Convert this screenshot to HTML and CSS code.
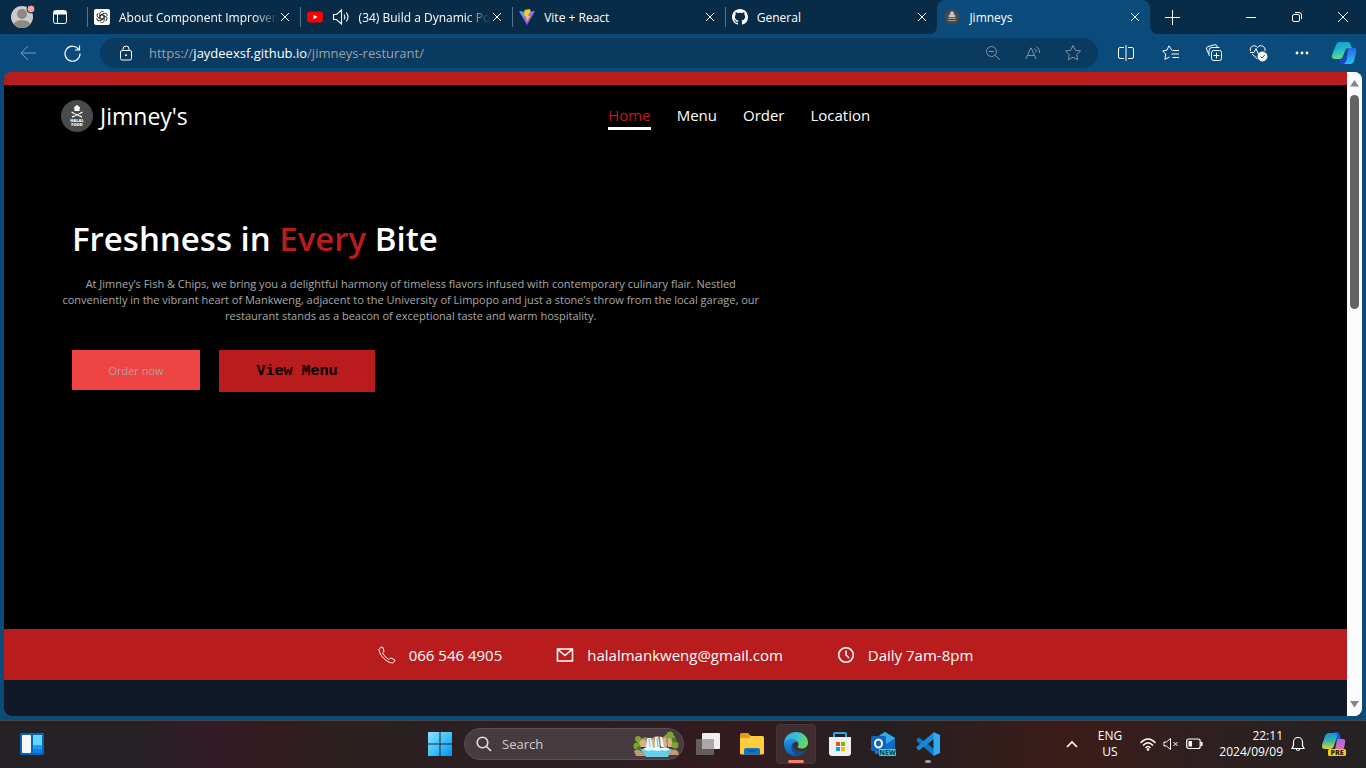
FILE: index.html
```html
<!DOCTYPE html>
<html lang="en">
<head>
<meta charset="utf-8">
<title>Jimneys</title>
<link rel="stylesheet" href="styles.css">
</head>
<body>
<header class="tabstrip">
  <div class="tabstrip-start">
    <button class="plain" aria-label="Profile">
      <svg width="26" height="26" viewBox="0 0 26 26"><clipPath id="av"><circle cx="13" cy="13" r="11"/></clipPath><circle cx="13" cy="13" r="11" fill="#cdcbc8"/><g fill="#8c8986" clip-path="url(#av)"><circle cx="13" cy="10" r="5"/><ellipse cx="13" cy="22" rx="9" ry="6"/></g><circle cx="22" cy="5" r="4" fill="#f7a19c" stroke="#082b47" stroke-width="1"/></svg>
    </button>
    <button class="plain" aria-label="Tab actions">
      <svg width="16" height="16" viewBox="0 0 16 16" fill="none" stroke="#fff"><rect x="1.5" y="1.5" width="13" height="13" rx="2"/><path d="M2 3h12M2 4.500h12" stroke-width="2"/><path d="M5.500 5v9"/></svg>
    </button>
  </div>
  <nav class="tabs" aria-label="Tabs">
    <div class="tab">
      <svg width="16" height="16" viewBox="0 0 16 16"><rect width="16" height="16" rx="2" fill="#fff"/><g fill="none" stroke="#222" stroke-width=".9"><g id="petal"><path d="M8 5.700 10.200 7V11.200a2.400 2.400 0 0 1-3.800 1.900"/></g><use href="#petal" transform="rotate(60 8 8)"/><use href="#petal" transform="rotate(120 8 8)"/><use href="#petal" transform="rotate(180 8 8)"/><use href="#petal" transform="rotate(240 8 8)"/><use href="#petal" transform="rotate(300 8 8)"/></g></svg>
      <span class="tab-title fade">About Component Improvem</span>
      <button class="plain close" aria-label="Close tab"><svg width="10" height="10" viewBox="0 0 10 10"><path d="M1 1l8 8M9 1l-8 8"/></svg></button>
    </div>
    <div class="tab">
      <svg width="16" height="16" viewBox="0 0 16 16"><rect y="2.500" width="16" height="11" rx="3" fill="#f00"/><path d="M6.500 5.700v4.600l4-2.300z" fill="#fff"/></svg>
      <svg width="18" height="18" viewBox="0 0 18 18" fill="none" stroke="#fff" stroke-width="1.100"><path d="M1.500 6.500h3l5-4.500v14l-5-4.500h-3zM12 6.500q1.700 2.500 0 5M14.300 4.500q3.400 4.500 0 9"/></svg>
      <span class="tab-title fade">(34) Build a Dynamic Po</span>
      <button class="plain close" aria-label="Close tab"><svg width="10" height="10" viewBox="0 0 10 10"><path d="M1 1l8 8M9 1l-8 8"/></svg></button>
    </div>
    <div class="tab">
      <svg width="16" height="16" viewBox="0 0 16 16"><defs><linearGradient id="vite" x1="0" y1="0" x2=".6" y2="1"><stop stop-color="#41b9ff"/><stop offset="1" stop-color="#b934fb"/></linearGradient></defs><path d="M0 2l8 1.200L16 2 8 16z" fill="url(#vite)"/><path d="M11 0 5.500 1 5.200 7.300 7 7 6.600 9.500 8 9.200 7.400 13.500 11.500 6.800 9.200 7.200 10.200 4 11.800 3.500z" fill="#ffc520"/></svg>
      <span class="tab-title">Vite + React</span>
      <button class="plain close" aria-label="Close tab"><svg width="10" height="10" viewBox="0 0 10 10"><path d="M1 1l8 8M9 1l-8 8"/></svg></button>
    </div>
    <div class="tab">
      <svg width="16" height="16" viewBox="0 0 16 16" fill="#fff"><path d="M8 0C3.580 0 0 3.580 0 8c0 3.540 2.290 6.530 5.470 7.590.4.070.55-.17.55-.38 0-.19-.01-.82-.01-1.490-2.010.37-2.530-.49-2.690-.94-.09-.23-.48-.94-.82-1.130-.28-.15-.68-.52-.01-.53.63-.01 1.080.58 1.230.82.72 1.210 1.870.87 2.330.66.07-.52.28-.87.51-1.070-1.780-.2-3.640-.89-3.640-3.950 0-.87.31-1.590.82-2.150-.08-.2-.36-1.020.08-2.120 0 0 .67-.21 2.200.82.64-.18 1.320-.27 2-.27s1.360.09 2 .27c1.530-1.040 2.200-.82 2.200-.82.44 1.100.16 1.920.08 2.120.51.56.82 1.270.82 2.150 0 3.070-1.870 3.750-3.650 3.950.29.25.54.73.54 1.480 0 1.070-.01 1.930-.01 2.200 0 .21.15.46.55.38A8.010 8.010 0 0 0 16 8c0-4.420-3.580-8-8-8z"/></svg>
      <span class="tab-title">General</span>
      <button class="plain close" aria-label="Close tab"><svg width="10" height="10" viewBox="0 0 10 10"><path d="M1 1l8 8M9 1l-8 8"/></svg></button>
    </div>
    <div class="tab active">
      <svg width="16" height="16" viewBox="0 0 16 16"><circle cx="8" cy="8" r="7.800" fill="#45484a"/><path d="M6.500 3h3v3h-3zM5 6h6v2H5zM4 9.500h8M4 11.500h8" fill="#ddd" stroke="#aaa" stroke-width=".8"/></svg>
      <span class="tab-title">Jimneys</span>
      <button class="plain close" aria-label="Close tab"><svg width="10" height="10" viewBox="0 0 10 10"><path d="M1 1l8 8M9 1l-8 8"/></svg></button>
    </div>
  </nav>
  <button class="plain new-tab" aria-label="New tab"><svg width="15" height="15" viewBox="0 0 15 15"><path d="M7.500 0v15M0 7.500h15"/></svg></button>
  <div class="window-controls">
    <button class="plain" aria-label="Minimize"><svg width="10" height="10" viewBox="0 0 10 10"><path d="M0 5.500h10"/></svg></button>
    <button class="plain" aria-label="Restore"><svg width="10" height="10" viewBox="0 0 10 10"><rect x=".5" y="2.500" width="7" height="7" rx="1.500"/><path d="M3 .5h4a2.500 2.500 0 0 1 2.500 2.500v4"/></svg></button>
    <button class="plain" aria-label="Close"><svg width="10" height="10" viewBox="0 0 10 10"><path d="M0 0l10 10M10 0L0 10"/></svg></button>
  </div>
</header>

<div class="toolbar">
  <button class="plain tool dim" aria-label="Back"><svg width="16" height="16" viewBox="0 0 16 16"><path d="M16 8H1M8 1L1 8l7 7"/></svg></button>
  <button class="plain tool" aria-label="Refresh"><svg width="17" height="17" viewBox="0 0 17 17"><path d="M14.700 4.500A7.500 7.500 0 1 0 16 8.500M15.500.5v4.500H11" stroke-width="1.200"/></svg></button>
  <div class="address">
    <svg width="14" height="16" viewBox="0 0 14 16"><rect x="1.500" y="5.500" width="11" height="9.500" rx="1.500"/><path d="M4 5.500V4a3 3 0 0 1 6 0v1.500"/><circle cx="7" cy="10.200" r=".6" fill="#fff"/></svg>
    <div class="url" role="textbox" aria-label="Address" contenteditable="true" spellcheck="false">https://<b>jaydeexsf.github.io</b>/jimneys-resturant/</div>
    <button class="plain addr-tool" aria-label="Zoom"><svg width="16" height="16" viewBox="0 0 16 16"><circle cx="6.500" cy="6.500" r="5"/><path d="M10.300 10.300l4.500 4.500M4 6.500h5"/></svg></button>
    <button class="plain addr-tool" aria-label="Read aloud"><svg width="17" height="16" viewBox="0 0 17 16"><path d="M1 14L5.700 3h.6L11 14M2.700 10.500h6.600M9.500 3.500q2 1.500 1.700 4M11.500 1.500q3.500 2.500 3 6.500"/></svg></button>
    <button class="plain addr-tool" aria-label="Add to favorites"><svg width="18" height="18" viewBox="0 0 18 18"><path d="M9 1.500l2.300 4.800 5.200.7-3.800 3.600.9 5.200L9 13.300l-4.600 2.500.9-5.200L1.500 7l5.200-.7z"/></svg></button>
  </div>
  <div class="tools">
    <button class="plain tool" aria-label="Split screen"><svg width="16" height="16" viewBox="0 0 16 16"><path d="M6 2.500H2a1.500 1.500 0 0 0-1.500 1.500v8A1.500 1.500 0 0 0 2 13.500h4M10 2.500h4A1.500 1.500 0 0 1 15.500 4v8a1.500 1.500 0 0 1-1.500 1.500h-4M8 0v16"/></svg></button>
    <button class="plain tool" aria-label="Favorites"><svg width="17" height="16" viewBox="0 0 17 16"><path d="M10 5.500L7 .8 4.900 5.200.7 5.900l3 3.200-.8 5.300L7.500 12M10.500 5.500H17M9.500 9H17M10.500 12.500H17"/></svg></button>
    <button class="plain tool" aria-label="Collections"><svg width="18" height="18" viewBox="0 0 18 18"><rect x="6.500" y="6.500" width="10" height="10" rx="2"/><path d="M11.500 8.500v6M8.500 11.500h6M4.500 12L1.500 5a2 2 0 0 1 1.300-2.300L9.500.8A2 2 0 0 1 12 2l.5 1.500M4 10V6.500a3 3 0 0 1 3-3h7.500"/></svg></button>
    <button class="plain tool" aria-label="Browser essentials"><svg width="19" height="18" viewBox="0 0 19 18"><path d="M1.500 7C0 2 6 0 8.500 3.500 11 0 17 2 16 7M3 10l5.500 5M1 8.500h4l2-4 2.500 6 1.500-2h3"/><circle cx="13.500" cy="12.500" r="4.500" fill="#fff"/><path d="M11.500 12.500l1.500 1.500 2.700-3" stroke="#0b4b7c"/></svg></button>
    <button class="plain tool" aria-label="Settings and more"><svg width="14" height="4" viewBox="0 0 14 4"><g fill="#fff" stroke="none"><circle cx="2" cy="2" r="1.400"/><circle cx="7" cy="2" r="1.400"/><circle cx="12" cy="2" r="1.400"/></g></svg></button>
    <button class="plain tool" aria-label="Copilot"><svg width="26" height="24" viewBox="0 0 26 24"><defs><linearGradient id="cpa" x2=".3" y2="1"><stop stop-color="#159ad8"/><stop offset=".5" stop-color="#1db7c9"/><stop offset="1" stop-color="#6bdc83"/></linearGradient><linearGradient id="cpb" x2="0" y2="1"><stop stop-color="#2867e5"/><stop offset="1" stop-color="#27c4f6"/></linearGradient></defs><g stroke="none"><path d="M9 15h8l-2 8h-4c-3 0-3-4-4-6z" fill="#1748ca"/><path d="M5 4Q6 1 9 1h8q2 0 3 4l1 2h-4q-2 0-3 3l-2 5q-1 3-4 3H4q-4 0-3-4z" fill="url(#cpa)"/><path d="M17 7h6q3 0 2 5l-2 8q-1 3-3 3h-7q2-1 3-5z" fill="url(#cpb)"/></g></svg></button>
  </div>
</div>

<div class="viewport">
  <main class="site">
    <div class="site-strip"></div>
    <div class="site-nav">
      <a class="brand" href="#home">
        <svg width="32" height="32" viewBox="0 0 32 32"><circle cx="16" cy="16" r="16" fill="#484b4c"/><path d="M13.500 11V9a1.600 1.600 0 0 1 .7-2.500 2 2 0 0 1 3.600 0 1.600 1.600 0 0 1 .7 2.500v2z" fill="#fff"/><path d="M11 12.500l9.500 4.500M21 12.500L11.500 17" stroke="#fff"/><path d="M10.500 12l2 1M21.500 12l-2 1M11 17l2-1M21 17l-2-1" stroke="#fff" stroke-width="1.300"/><g fill="#fff" font-family="Open Sans" font-weight="800" font-size="4" text-anchor="middle"><text x="16" y="22">HALAL</text><text x="16" y="26">FOOD</text></g></svg>
        <span>Jimney's</span>
      </a>
      <nav class="menu" aria-label="Site">
        <a class="current" href="#home">Home</a><a href="#menu">Menu</a><a href="#order">Order</a><a href="#location">Location</a>
      </nav>
    </div>
    <section class="hero">
      <h1>Freshness in <em>Every</em> Bite</h1>
      <p>At Jimney’s Fish &amp; Chips, we bring you a delightful harmony of timeless flavors infused with contemporary culinary flair. Nestled conveniently in the vibrant heart of Mankweng, adjacent to the University of Limpopo and just a stone’s throw from the local garage, our restaurant stands as a beacon of exceptional taste and warm hospitality.</p>
      <div class="actions">
        <button class="btn-order">Order now</button>
        <button class="btn-menu">View Menu</button>
      </div>
    </section>
    <div class="contact">
      <a href="tel:0665464905"><svg width="18" height="18" viewBox="0 0 18 18"><path d="M1 3.500Q2.500.5 4.500 1L6 5q0 1-1.500 2 2.500 4.500 6.500 6.500 1-1.500 2-1.500l4 2q.5 1-2.500 3C9 17 1 9 1 3.500z"/></svg>066 546 4905</a>
      <a href="mailto:halalmankweng@gmail.com"><svg width="18" height="18" viewBox="0 0 18 18"><path d="M1.500 3h15v12h-15zM2 3.500l7 6 7-6" stroke-width="1.600"/></svg>halalmankweng@gmail.com</a>
      <span><svg width="18" height="18" viewBox="0 0 18 18"><circle cx="9" cy="9" r="7.300" stroke-width="1.600"/><path d="M9 4.500V9l3 3" stroke-width="1.400"/></svg>Daily 7am-8pm</span>
    </div>
    <div class="below"></div>
  </main>
  <div class="scrollbar" aria-hidden="true">
    <svg width="9" height="8" viewBox="0 0 9 8"><path d="M4.500 1L9 7.500H0z"/></svg>
    <div class="thumb"></div>
    <svg width="9" height="8" viewBox="0 0 9 8"><path d="M4.500 7.500L9 1H0z"/></svg>
  </div>
</div>

<footer class="taskbar">
  <div class="task-left">
    <button class="plain" aria-label="Widgets"><svg width="24" height="22" viewBox="0 0 24 22"><rect width="24" height="22" rx="1" fill="#0a64b8"/><rect x="2" y="2" width="9" height="18" rx="1" fill="#f7f7f7"/><path d="M13 2h9v10h-9z" fill="#63d5ff"/><path d="M13 12h9v4h-9z" fill="#1c9cf2"/><path d="M13 16h9v4h-9z" fill="#0882e6"/></svg></button>
  </div>
  <div class="task-center">
    <button class="plain app" aria-label="Start"><svg width="24" height="24" viewBox="0 0 24 24"><defs><linearGradient id="win" x2="1" y2="1"><stop stop-color="#8ce0ff"/><stop offset=".5" stop-color="#40c4ff"/><stop offset="1" stop-color="#0091f8"/></linearGradient></defs><path d="M0 0h11.500v11.500H0zM12.500 0H24v11.500H12.500zM0 12.500h11.500V24H0zM12.500 12.500H24V24H12.500z" fill="url(#win)"/></svg></button>
    <label class="search">
      <svg width="16" height="16" viewBox="0 0 16 16" fill="none" stroke="#e4e0e1" stroke-width="1.600"><circle cx="6.500" cy="6.500" r="5.300"/><path d="M10.500 10.500L15 15"/></svg>
      <input type="text" placeholder="Search" aria-label="Search">
      <svg width="46" height="26" viewBox="0 0 46 26"><path d="M5 9l7-3 5 2 6-3 7 1 5-4 7 3v10H5z" fill="#a7865f"/><path d="M6 10l6-2 2 8H6zM17 9l4-2 2 9h-5zM29 8l4-2 1 10h-5zM35 5l5 3-1 8h-4z" fill="#d5b587"/><path d="M14 7h4l2 10h-7zM22 6h3l2 11h-5zM27 6h2l2 10h-3z" fill="#e9fbff"/><path d="M16 8l1 8M24 7l1 9" stroke="#6fc8e9" stroke-width="1.200"/><path d="M7 18h32l-4 8H13z" fill="#63cfed"/><path d="M10 18q4-3 8-1 6-2 10 0 5-2 9 1-4 3-8 1-5 2-9 0-5 2-10-1z" fill="#eefcff"/><g fill="#78a72d"><circle cx="5" cy="8" r="3"/><circle cx="37" cy="4" r="3.500"/><circle cx="42" cy="14" r="3.500"/><circle cx="4" cy="15" r="3.500"/></g><g fill="#4f7b22"><circle cx="6" cy="17" r="2"/><circle cx="41" cy="9" r="2.500"/></g><path d="M1 20q4-3 8 1l4 4H3zM35 24q3-7 8-5 4 2 2 5z" fill="#bf9a73"/></svg>
    </label>
    <button class="plain app" aria-label="Task view"><svg width="24" height="22" viewBox="0 0 24 22"><rect x="6" width="18" height="16" rx="1" fill="#f0efef"/><rect y="6" width="18" height="16" rx="1" fill="#666463" fill-opacity=".92"/><path d="M6 6h12v10H6z" fill="#aaa9a8"/></svg></button>
    <button class="plain app" aria-label="File Explorer"><svg width="24" height="22" viewBox="0 0 24 22"><path d="M0 2Q0 0 1.500 0H8l3 3v5H0z" fill="#e09e10"/><path d="M0 5h9l2-2h11.500Q24 3 24 4.500V20q0 1.500-1.500 1.500h-21Q0 21.500 0 20z" fill="#ffcc40"/><path d="M4 21.500V17q0-2 2-2h12q2 0 2 2v4.500z" fill="#0b73cb"/><path d="M8 18h8" stroke="#034d94" stroke-width="1.500"/></svg></button>
    <button class="plain app running" aria-label="Microsoft Edge"><svg width="24" height="24" viewBox="0 0 24 24"><defs><linearGradient id="ea" x1="0" x2="1" y1=".2" y2=".5"><stop stop-color="#2fa6e8"/><stop offset=".5" stop-color="#35c1d3"/><stop offset="1" stop-color="#68dc55"/></linearGradient><linearGradient id="eb" x2="0" y2="1"><stop stop-color="#1f99df"/><stop offset="1" stop-color="#0b5eb8"/></linearGradient></defs><path d="M0 12C0 4 6 0 12 0c7 0 12 5 12 10.500 0 4-3 6-6.500 6-3 0-4-1-3.700-2 1.500-1.500 1-6.500-5.300-6.500C4 8 1 10 0 12z" fill="url(#ea)"/><path d="M0 12c1-5 10-8 14-2-4-1-7 3-5.500 7C10 21 16 22.500 21 19c-2 3.500-5.500 5-9 5C5 24 0 19 0 12z" fill="url(#eb)"/><path d="M9.500 10.500C5 14 8 24 15 23.600c3-.6 5-2.300 6.500-4.600.5-1 0-1-1-.5-5 2.500-10 0-11-3-.5-2-.2-3.500 0-5z" fill="#144c91"/></svg></button>
    <button class="plain app" aria-label="Microsoft Store"><svg width="24" height="24" viewBox="0 0 24 24"><path d="M6 6V2q0-1 1-1h10q1 0 1 1v4" fill="none" stroke="#29a9e7" stroke-width="2"/><path d="M1 5h22v16q0 3-3 3H4q-3 0-3-3z" fill="#f0f0f0"/><path d="M8 10h4v4H8z" fill="#f04e22"/><path d="M13 10h4v4h-4z" fill="#7db800"/><path d="M8 15h4v4H8z" fill="#00a3ec"/><path d="M13 15h4v4h-4z" fill="#ffb600"/></svg></button>
    <button class="plain app" aria-label="Outlook"><svg width="26" height="24" viewBox="0 0 26 24"><path d="M4 6l10-6 10 6v16H4z" fill="#1f7ed1"/><path d="M9 3l5-3 10 6-10 7z" fill="#2fabe8"/><path d="M14 13l10-6v15H4z" fill="#1769be"/><rect y="4" width="15" height="15" rx="1.500" fill="#0b64bf"/><ellipse cx="7.500" cy="11.500" rx="3.500" ry="4" fill="none" stroke="#fff" stroke-width="2"/><rect x="8" y="17" width="17" height="7" rx="1" fill="#38d6d5"/><text x="16.500" y="23" font-family="Open Sans" font-size="7" font-weight="700" text-anchor="middle" fill="#06363b">NEW</text></svg></button>
    <button class="plain app open" aria-label="Visual Studio Code"><svg width="24" height="24" viewBox="0 0 24 24"><path d="M1 7l2-1.500L18 17v7L.500 9z" fill="#0c78c3"/><path d="M1 17l2 1.500L18 7V0L.500 15z" fill="#138bd5"/><path d="M17.500 0L24 3v18l-6.500 3z" fill="#30a8f2"/></svg></button>
  </div>
  <div class="task-right">
    <button class="plain chevron" aria-label="Show hidden icons"><svg width="12" height="8" viewBox="0 0 12 8"><path d="M1 7l5-5 5 5" stroke-width="1.600"/></svg></button>
    <button class="plain language"><span>ENG</span><span>US</span></button>
    <button class="plain status" aria-label="Network, sound and battery">
      <svg width="16" height="13" viewBox="0 0 16 13"><path d="M.5 5q7.500-8 15 0M3 7.500q5-5.500 10 0M5.500 10q2.500-3 5 0" stroke-width="1.300"/><circle cx="8" cy="11.500" r="1.300" fill="#fff" stroke="none"/></svg>
      <svg width="16" height="14" viewBox="0 0 16 14"><path d="M1 5h2.500L7.500 1.500v11L3.500 9H1zM10.500 5l4 4M14.500 5l-4 4"/></svg>
      <svg width="17" height="12" viewBox="0 0 17 12"><rect x=".7" y="1" width="13.500" height="9.500" rx="2" stroke-width="1.200"/><path d="M15.800 4v4" stroke-width="1.600"/><path d="M2.500 3H6v5.500H2.500z" fill="#fff" stroke="none"/></svg>
    </button>
    <button class="plain clock"><time>22:11</time><time>2024/09/09</time></button>
    <button class="plain bell" aria-label="Notifications"><svg width="14" height="16" viewBox="0 0 14 16"><path d="M2.500 9.500V6a4.500 4.500 0 0 1 9 0v3.500l1.500 3H1zM5 13q2 3 4 0" stroke-width="1.200"/></svg></button>
    <button class="plain copilot" aria-label="Copilot preview"><svg width="24" height="24" viewBox="0 0 24 24"><defs><linearGradient id="ca" x2="0" y2="1"><stop stop-color="#168ce6"/><stop offset=".5" stop-color="#31b8a4"/><stop offset="1" stop-color="#e4cf35"/></linearGradient><linearGradient id="cb" x2="0" y2="1"><stop stop-color="#a664ec"/><stop offset="1" stop-color="#f06d9d"/></linearGradient></defs><path d="M12 0h3q2 0 3 3l1 4h-5z" fill="#1b56c9"/><path d="M3 4Q4 1 7 1h6q3 0 2 4l-3 9q-1 3-4 3H3q-4 0-3-4z" fill="url(#ca)"/><path d="M15 7h6q3 0 2 4l-1 5q-1 3-4 3h-6q1-1 2-6z" fill="url(#cb)"/><rect x="6" y="17" width="18" height="7" rx="1.500" fill="#f8c91d"/><text x="15" y="23" font-family="Open Sans" font-size="7" font-weight="800" text-anchor="middle" fill="#2b2100">PRE</text></svg></button>
  </div>
</footer>
</body>
</html>
```
FILE: styles.css
```css
* { box-sizing: border-box; }

body {
  margin: 0;
  height: 100vh;
  display: flex;
  flex-direction: column;
  overflow: hidden;
  background: #0b4b7c;
  color: #fff;
  font-family: "Open Sans", "Noto Sans", sans-serif;
  font-size: 12px;
}

svg { flex: none; display: block; }
a { color: inherit; text-decoration: none; }

.plain {
  display: flex;
  align-items: center;
  justify-content: center;
  flex: none;
  padding: 0;
  border: 0;
  background: none;
  color: inherit;
  font: inherit;
}

/* Tab strip */
.tabstrip {
  display: flex;
  flex: none;
  height: 34px;
  background: #082b47;
}
.tabstrip-start {
  display: flex;
  flex: none;
  align-items: center;
  gap: 17px;
  width: 87px;
  padding-left: 9px;
}
.tabs { display: flex; flex: 0 1 1063px; min-width: 0; }
.tab {
  display: flex;
  flex: 1 1 0;
  min-width: 0;
  align-items: center;
  gap: 9px;
  padding: 0 10px 0 7px;
  background: linear-gradient(#58728a, #58728a) 0 7px / 1px 20px no-repeat;
}
.tab.active {
  position: relative;
  background: #0b4b7c;
  border-radius: 8px 8px 0 0;
}
.tab.active::before,
.tab.active::after {
  content: "";
  position: absolute;
  bottom: 0;
  width: 8px;
  height: 8px;
}
.tab.active::before { right: 100%; background: radial-gradient(circle at 0 0, #082b47 8px, #0b4b7c 8px); }
.tab.active::after { left: 100%; background: radial-gradient(circle at 100% 0, #082b47 8px, #0b4b7c 8px); }
.tab-title { flex: 1; min-width: 0; overflow: hidden; white-space: nowrap; }
.tab-title.fade { margin-right: -7px; mask-image: linear-gradient(to left, transparent, #000 24px); }
.close svg, .new-tab svg, .window-controls svg, .toolbar svg, .chevron svg, .status svg, .bell svg {
  fill: none;
  stroke: #fff;
}
.new-tab { width: 44px; }
.window-controls { display: flex; margin-left: auto; }
.window-controls .plain { width: 46px; }

/* Toolbar */
.toolbar { display: flex; flex: none; height: 38px; align-items: center; padding: 0 2px 0 6px; }
.tool { width: 44px; height: 32px; }
.dim { opacity: .45; }
.address {
  display: flex;
  flex: 1;
  align-items: center;
  height: 30px;
  margin: 0 6px;
  padding: 0 5px 0 19px;
  border-radius: 15px;
  background: #093a60;
}
.url { flex: 1; padding-left: 16px; color: #a0a0a0; font-size: 13px; outline: 0; white-space: nowrap; }
.url b { color: #fff; font-weight: 400; }
.addr-tool { width: 40px; height: 28px; }
.address .addr-tool svg { stroke: #8594a2; }
.tools { display: flex; }
.tools .tool:last-child { width: 40px; }

/* Page area */
.viewport {
  display: flex;
  flex: 1;
  min-height: 0;
  margin: 0 4px 4px;
  overflow: hidden;
  border-radius: 8px;
  background: #fcfcfc;
}
.site { display: flex; flex: 1; flex-direction: column; min-width: 0; background: #000; }
.site-strip { flex: none; height: 13px; background: #b91c1c; }
.site-nav {
  display: grid;
  grid-template-columns: 41fr 59fr;
  align-items: center;
  height: 62px;
  padding-left: 57px;
}
.brand { display: flex; align-items: center; gap: 7px; font-size: 23px; }
.menu { display: flex; gap: 26px; padding-left: 20px; font-size: 15px; line-height: 24px; }
.menu a { border-bottom: 3px solid transparent; }
.menu .current { color: #b91c1c; border-color: #fff; }
.hero { flex: 1; width: 57%; padding: 68px 20px 0 68px; }
.hero h1 { margin: 0; font-size: 33px; line-height: 48px; font-weight: 600; }
.hero em { color: #b91c1c; font-style: normal; }
.hero p { margin: 13px -10px 26px; color: #a8a8a8; font-size: 11px; line-height: 16px; text-align: center; }
.actions { display: flex; align-items: flex-start; gap: 19px; }
.btn-order, .btn-menu { padding: 0; border: 0; }
.btn-order { width: 128px; height: 40px; background: #ef4444; color: #b0a0a0; font: 11px "Open Sans", sans-serif; }
.btn-menu { width: 156px; height: 42px; background: #b91c1c; color: #000; font: bold 15px "Liberation Mono", monospace; }
.contact {
  display: flex;
  flex: none;
  align-items: center;
  justify-content: center;
  gap: 54px;
  height: 51px;
  background: #b91c1c;
  font-size: 15px;
}
.contact a, .contact span { display: flex; align-items: center; gap: 13px; }
.contact svg { fill: none; stroke: #fff; }
.below { flex: none; height: 36px; background: #111827; }
.scrollbar {
  display: flex;
  flex: none;
  flex-direction: column;
  align-items: center;
  width: 15px;
  padding: 7px 0 8px;
  background: #fcfcfc;
}
.scrollbar svg { fill: #858585; }
.scrollbar svg:last-child { margin-top: auto; }
.thumb { width: 9px; height: 34%; margin-top: 8px; border-radius: 5px; background: #636363; }

/* Taskbar */
.taskbar {
  display: grid;
  flex: none;
  grid-template-columns: minmax(0, 1fr) auto minmax(0, 1fr);
  height: 48px;
  box-shadow: inset 0 1px #494547;
  background: linear-gradient(90deg, #242225 0, #242225 9%, #321c27 15%, #331b20 20%, #2d201f 24%, #2a2022 33%, #321b1e 55%, #251f22 65%, #3c1c18 78%, #321f20 86%, #232223 100%);
}
.task-left { display: flex; padding-left: 20px; }
.task-center { display: flex; align-items: center; padding-left: 2px; }
.app { position: relative; width: 40px; height: 40px; margin: 0 2px; border: 1px solid transparent; border-radius: 4px; }
.running { background: #402d30; border-color: #49383b; }
.running::after, .open::after {
  content: "";
  position: absolute;
  bottom: 0;
  left: 50%;
  width: 6px;
  height: 3px;
  border-radius: 2px;
  background: #999;
  transform: translateX(-50%);
}
.running::after { width: 16px; background: #f58068; }
.search {
  display: flex;
  align-items: center;
  gap: 10px;
  width: 220px;
  height: 32px;
  margin: 0 2px;
  padding: 0 4px 0 11px;
  border: 1px solid #5c5154;
  border-radius: 16px;
  background: #463c40;
}
.search input {
  flex: 1;
  min-width: 0;
  padding: 0;
  border: 0;
  outline: 0;
  background: none;
  color: #fff;
  font: 13px "Open Sans", sans-serif;
}
.search input::placeholder { color: #d2cccd; opacity: 1; }
.task-right { display: flex; align-items: center; justify-content: flex-end; padding-right: 20px; }
.chevron { width: 24px; }
.language { flex-direction: column; width: 52px; font-size: 12px; line-height: 16px; }
.status { gap: 7px; padding: 0 4px; }
.clock { flex-direction: column; align-items: flex-end; width: 76px; font-size: 12px; line-height: 16px; }
.bell { width: 30px; }
.copilot { margin-left: 9px; }
```
